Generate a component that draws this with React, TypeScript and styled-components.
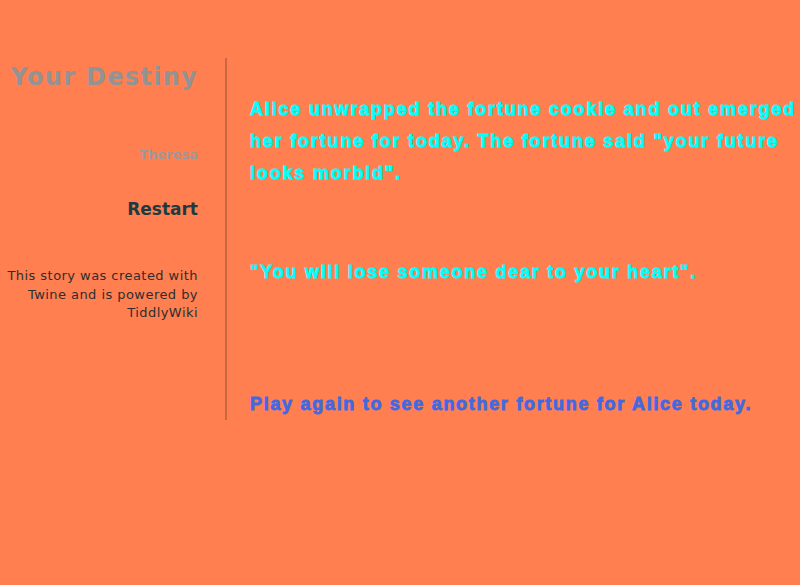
import React from "react";
import styled, { createGlobalStyle } from "styled-components";

const Global = createGlobalStyle`
  html, body {
    margin: 0;
    padding: 0;
    background: #ff7f50;
    width: 800px;
    height: 585px;
    overflow: hidden;
  }
`;

const Page = styled.div`
  display: flex;
  align-items: flex-start;
  padding-top: 58px;
`;

const Sidebar = styled.aside`
  width: 198px;
  padding-right: 27px;
  border-right: 2px solid #c8683f;
  height: 362px;
  display: flex;
  flex-direction: column;
  align-items: flex-end;
  text-align: right;
  font-family: "DejaVu Sans", Verdana, sans-serif;
`;

const Title = styled.h1`
  margin: 0;
  margin-top: 4px;
  font-size: 24px;
  font-weight: bold;
  letter-spacing: 1.3px;
  color: #939393;
  line-height: 30px;
`;

const Author = styled.div`
  margin-top: 55px;
  font-size: 13px;
  font-weight: bold;
  color: #9a9a9a;
  line-height: 16px;
`;

const MenuLink = styled.a`
  margin-top: 35px;
  font-size: 17px;
  font-weight: bold;
  color: #1e3a40;
  line-height: 22px;
  text-decoration: none;
`;

const Credits = styled.p`
  margin: 47px 0 0;
  font-size: 13px;
  letter-spacing: 0.45px;
  color: #2e2e2e;
  line-height: 18.5px;
`;

const Passage = styled.main`
  flex: 1;
  padding-left: 23px;
  padding-top: 35px;
  font-family: "Liberation Sans", Arial, sans-serif;
  font-weight: bold;
  font-size: 18px;
  line-height: 32px;
`;

const Line = styled.p<{ $color: string; $gap: number; $spacing: number }>`
  margin: ${(p) => p.$gap}px 0 0;
  color: ${(p) => p.$color};
  letter-spacing: ${(p) => p.$spacing}px;
  -webkit-text-stroke: 0.8px ${(p) => p.$color};
`;

export default function App() {
  return (
    <>
      <Global />
      <Page>
        <Sidebar>
          <Title>Your Destiny</Title>
          <Author>Theresa</Author>
          <MenuLink href="#">Restart</MenuLink>
          <Credits>
            This story was created with
            <br />
            Twine and is powered by
            <br />
            TiddlyWiki
          </Credits>
        </Sidebar>
        <Passage>
          <Line $color="#00ffff" $gap={0} $spacing={1.82}>
            Alice unwrapped the fortune cookie and out emerged her fortune for
            today. The fortune said "your future looks morbid".
          </Line>
          <Line $color="#00ffff" $gap={67} $spacing={1.75}>
            "You will lose someone dear to your heart".
          </Line>
          <Line $color="#4169e1" $gap={100} $spacing={1.7}>
            Play again to see another fortune for Alice today.
          </Line>
        </Passage>
      </Page>
    </>
  );
}
